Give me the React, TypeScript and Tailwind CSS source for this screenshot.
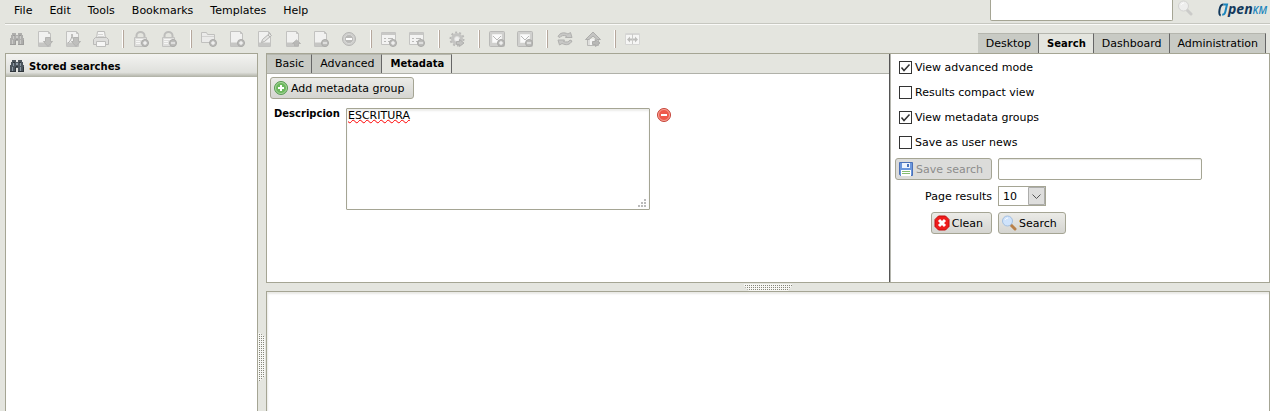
import React, { useState } from 'react';

type IconProps = { children: React.ReactNode; size?: number };

const Icon: React.FC<IconProps> = ({ children, size = 16 }) => (
  <svg width={size} height={size} viewBox="0 0 16 16" fill="none" aria-hidden="true" className="shrink-0">
    {children}
  </svg>
);

const PlusBadge = () => (
  <>
    <circle cx="12" cy="12" r="3.5" fill="#bdbdbb" stroke="#a9a9a7" />
    <path d="M10 12h4M12 10v4" stroke="#fff" />
  </>
);

const MinusBadge = () => (
  <>
    <circle cx="12" cy="12" r="3.5" fill="#bdbdbb" stroke="#a9a9a7" />
    <path d="M10 12h4" stroke="#fff" />
  </>
);

const Page = () => (
  <>
    <path d="M1.5.5h10l2 2v13h-12z" fill="#f1f1f0" stroke="#c2c2c0" />
    <path d="M2 13h11" stroke="#c6c6c4" strokeWidth="4" />
    <path d="M2 11.5h11" stroke="#dcdcda" />
    <path d="M11.5.5v2h2" stroke="#c2c2c0" />
  </>
);

const DownArrow = () => (
  <path d="M8.500 6.500h5v4h2l-4.500 5-4.500-5h2z" fill="#bfbfbd" stroke="#b3b3b1" />
);

const Binoculars: React.FC<{ dark?: boolean }> = ({ dark }) => {
  const body = dark ? '#4d565e' : '#aeaeac';
  const light = dark ? '#8d9aa5' : '#cacac8';
  const deep = dark ? '#2f363c' : '#9c9c9a';
  return (
    <Icon>
      <path d="M3 2h4v2h2V2h4v2h1v3h1v7H9v-4H7v4H1V7h1V4h1z" fill={body} />
      <path d="M4 4h2v1H4zM10 4h2v1h-2zM1 13h6v1H1zM9 13h6v1H9zM7 8h2v1H7zM6 9h1v4H6zM14 9h1v4h-1z" fill={deep} />
      <path d="M3 9h1v4H3zM11 9h1v4h-1zM4 5h1v3H4zM11 5h1v3h-1zM7 5h2v2H7z" fill={light} />
    </Icon>
  );
};

const Lock = () => (
  <>
    <path d="M3.500 7V4.500a4 3.500 0 0 1 8 0V7" stroke="#bdbdbb" strokeWidth="2" />
    <path d="M1.500 6.500h12v9h-12z" fill="#dededc" stroke="#c2c2c0" />
    <path d="M3 8.500h8M3 10.500h4M3 12.500h4" stroke="#f6f6f5" />
  </>
);

const FormSheet = () => (
  <>
    <path d="M.5 1.500h14v12H.5z" fill="#f3f3f2" stroke="#c4c4c2" />
    <path d="M1 3h13" stroke="#c8c8c6" strokeWidth="2" />
    <path d="M3 7.500h2M3 10.500h2M7 7.500h5M7 10.500h3" stroke="#b9b9b7" />
  </>
);

const Envelope = () => (
  <>
    <rect x=".5" y=".5" width="15" height="15" rx="1" fill="#d0d0ce" stroke="#b9b9b7" />
    <path d="M3.500 3.500h9v8h-9z" fill="#fafafa" stroke="#f0f0ef" />
    <path d="M4 5l4 4 4-4" stroke="#b9b9b7" />
  </>
);

const toolGroups: { label: string; art: React.ReactNode }[][] = [
  [
    { label: 'Find', art: <Binoculars /> },
    { label: 'Download', art: <Icon><Page /><DownArrow /></Icon> },
    {
      label: 'Download as PDF',
      art: (
        <Icon>
          <Page />
          <path d="M3 12c3-2 4-6 4-9 0 4 2 7 5 8" stroke="#b0b0ae" />
          <DownArrow />
        </Icon>
      ),
    },
    {
      label: 'Print',
      art: (
        <Icon>
          <path d="M3.500 7.500l1-7h7l1 7" fill="#f6f6f5" stroke="#bdbdbb" />
          <path d="M.5 8.500l2-2h11l2 2v5H.5z" fill="#dededc" stroke="#b9b9b7" />
          <path d="M3.500 10.500h9v5h-9z" fill="#f6f6f5" stroke="#bdbdbb" />
          <path d="M5 3.500h5M5 5.500h6" stroke="#d6d6d4" />
        </Icon>
      ),
    },
  ],
  [
    { label: 'Lock', art: <Icon><Lock /><PlusBadge /></Icon> },
    { label: 'Unlock', art: <Icon><Lock /><MinusBadge /></Icon> },
  ],
  [
    {
      label: 'Create folder',
      art: (
        <Icon>
          <path d="M.5 11.500v-10h5l1 2h7v8z" fill="#ebebea" stroke="#c0c0be" />
          <path d="M1 5.500h12" stroke="#d3d3d1" />
          <PlusBadge />
        </Icon>
      ),
    },
    { label: 'Add document', art: <Icon><Page /><PlusBadge /></Icon> },
    {
      label: 'Edit',
      art: (
        <Icon>
          <Page />
          <path d="M4.500 11.500l1-3 7-6 2 2-7 6z" fill="#e4e4e2" stroke="#b3b3b1" />
          <path d="M11 4l2 2" stroke="#b3b3b1" />
        </Icon>
      ),
    },
    {
      label: 'Check in',
      art: (
        <Icon>
          <Page />
          <path d="M11.500 9l4 3.500h-2V15h-4v-2.500h-2z" fill="#b9b9b7" stroke="#b3b3b1" />
        </Icon>
      ),
    },
    { label: 'Cancel check out', art: <Icon><Page /><MinusBadge /></Icon> },
    {
      label: 'Delete',
      art: (
        <Icon>
          <circle cx="8" cy="8" r="6.500" fill="#cfcfcd" stroke="#b5b5b3" />
          <circle cx="8" cy="8" r="4.500" fill="#b9b9b7" stroke="#d9d9d7" />
          <path d="M5 8h6" stroke="#fff" strokeWidth="2" />
        </Icon>
      ),
    },
  ],
  [
    { label: 'Add property group', art: <Icon><FormSheet /><PlusBadge /></Icon> },
    { label: 'Remove property group', art: <Icon><FormSheet /><MinusBadge /></Icon> },
  ],
  [
    {
      label: 'Start workflow',
      art: (
        <Icon>
          <circle cx="8" cy="8" r="6.500" stroke="#b9b9b7" strokeWidth="2" strokeDasharray="2 2" />
          <circle cx="8" cy="8" r="4.500" fill="#dededc" stroke="#c4c4c2" strokeWidth="3" />
          <circle cx="8" cy="8" r="2" fill="#f0f0ef" />
          <path d="M7.500 10.500h3v-2l4.500 3.500-4.500 3.500v-2h-3z" fill="#c2c2c0" stroke="#b0b0ae" />
        </Icon>
      ),
    },
  ],
  [
    { label: 'Add subscription', art: <Icon><Envelope /><PlusBadge /></Icon> },
    { label: 'Remove subscription', art: <Icon><Envelope /><MinusBadge /></Icon> },
  ],
  [
    {
      label: 'Refresh',
      art: (
        <Icon>
          <path d="M1 5.500C3 1.500 7 1 11 3l2.500-1.500L15 6.500H8.500l1-1.500C6.500 4 4 4.500 3 6.500z" fill="#c8c8c6" stroke="#b0b0ae" />
          <path d="M15 10c-2 4-6 4.500-10 2.500L2.500 14 1 9h6.500l-1 1.500c3 1 5.500.5 6.500-1.500z" fill="#c8c8c6" stroke="#b0b0ae" />
        </Icon>
      ),
    },
    {
      label: 'Home',
      art: (
        <Icon>
          <path d="M2.500 8v6.500h11V8" fill="#dededc" stroke="#b9b9b7" />
          <path d="M.5 8.500L8 1l7.500 7.500H12L8 5 4 8.500z" fill="#c4c4c2" stroke="#adadab" />
          <path d="M5 8h4v6H5z" fill="#f4f4f3" />
          <path d="M7.500 10.500h3v-2l4.500 3.500-4.500 3.500v-2h-3z" fill="#b9b9b7" stroke="#adadab" />
        </Icon>
      ),
    },
  ],
  [
    {
      label: 'Split view',
      art: (
        <Icon>
          <path d="M.5 2.500h14v11H.5z" fill="#f6f6f5" stroke="#d6d6d4" />
          <path d="M1 3h13" stroke="#d6d6d4" strokeWidth="2" />
          <path d="M7.500 3v10" stroke="#cacac8" />
          <path d="M2 8.500L5 5.500v2h2v2H5v2zM13 8.500l-3-3v2H8v2h2v2z" fill="#bdbdbb" />
        </Icon>
      ),
    },
  ],
];

const Magnifier: React.FC<{ disabled?: boolean }> = ({ disabled }) => (
  <Icon>
    <path d="M10 10l4 4" stroke={disabled ? '#cbcbc9' : '#b98048'} strokeWidth="3" strokeLinecap="round" />
    <circle cx="6.5" cy="6" r="5" fill={disabled ? '#eeeeed' : '#cfe3fb'} stroke={disabled ? '#d3d3d1' : '#a3bfe0'} />
    <path d="M4 5c.5-1 1.500-2 3-2" stroke="#fff" />
  </Icon>
);

const AddIcon = () => (
  <Icon>
    <circle cx="8" cy="8" r="6.500" fill="#6cb85e" stroke="#5a9a55" />
    <circle cx="8" cy="8" r="5.500" stroke="#a9d79d" />
    <path d="M5 8h6M8 5v6" stroke="#fff" strokeWidth="2" />
  </Icon>
);

const RemoveIcon = () => (
  <Icon>
    <circle cx="8" cy="7" r="6.500" fill="#ee5a4c" stroke="#c4463c" />
    <circle cx="8" cy="7" r="5.500" stroke="#f6a597" />
    <path d="M5 7h6" stroke="#fff" strokeWidth="2" />
  </Icon>
);

const DiskIcon = () => (
  <Icon>
    <path d="M1.500 1.500h13v13h-12l-1-1z" fill="#6c97dc" stroke="#4a70b8" />
    <path d="M4 2h8v5H4z" fill="#eef4fd" />
    <path d="M9 3h2v3H9z" fill="#4a74bd" />
    <path d="M3 9h10v6H3z" fill="#fff" />
    <path d="M4 10.500h8M4 12.500h8" stroke="#86bd70" />
  </Icon>
);

const CleanIcon = () => (
  <Icon>
    <path d="M4.500 1h7L15 4.500v7L11.500 15h-7L1 11.500v-7z" fill="#ee1c1c" stroke="#c40d0d" />
    <path d="M5 5l6 6M11 5l-6 6" stroke="#fff" strokeWidth="3" />
  </Icon>
);

const HorizontalGrip = () => (
  <svg width="48" height="7" aria-hidden="true">
    <defs>
      <pattern id="dots" width="2" height="2" patternUnits="userSpaceOnUse">
        <rect width="2" height="2" fill="#f7f7f4" />
        <rect x="1" y="1" width="1" height="1" fill="#85867a" />
      </pattern>
    </defs>
    <path d="M0 0h48v2l-4 5H5L0 2z" fill="url(#dots)" />
  </svg>
);

const VerticalGrip = () => (
  <svg width="7" height="48" aria-hidden="true">
    <path d="M0 0h2l5 4v39l-5 5H0z" fill="url(#dots)" />
  </svg>
);

interface TabBarProps {
  tabs: string[];
  active: string;
  onChange: (tab: string) => void;
}

const TabBar: React.FC<TabBarProps> = ({ tabs, active, onChange }) => (
  <div role="tablist" className="flex">
    {tabs.map(tab => (
      <button
        key={tab}
        role="tab"
        aria-selected={tab === active}
        onClick={() => onChange(tab)}
        className={`border-t border-r border-t-[#b5b6ae] border-r-[#666] pr-[7px] pl-2 ${
          tab === active ? 'bg-[#e4e5df] text-[10px] font-bold' : 'bg-[#c8cac4]'
        }`}
      >
        {tab}
      </button>
    ))}
  </div>
);

interface ActionButtonProps {
  icon: React.ReactNode;
  label: string;
  disabled?: boolean;
}

const ActionButton: React.FC<ActionButtonProps> = ({ icon, label, disabled }) => (
  <button
    disabled={disabled}
    className="flex h-[22px] items-center gap-[2px] rounded-[3px] border border-[#a5a594] bg-linear-to-b from-[#ebebe7] to-[#d5d5d1] pr-2 pl-[2px] whitespace-nowrap disabled:bg-none disabled:bg-[#dcdcda] disabled:text-[#8c8c8c]"
  >
    {icon}
    <span className="pt-[2px]">{label}</span>
  </button>
);

const menus = ['File', 'Edit', 'Tools', 'Bookmarks', 'Templates', 'Help'];

const App: React.FC = () => {
  const [mainTab, setMainTab] = useState('Search');
  const [searchTab, setSearchTab] = useState('Metadata');
  const [description, setDescription] = useState('ESCRITURA');
  const [options, setOptions] = useState([
    { label: 'View advanced mode', checked: true },
    { label: 'Results compact view', checked: false },
    { label: 'View metadata groups', checked: true },
    { label: 'Save as user news', checked: false },
  ]);

  const toggle = (label: string) =>
    setOptions(options.map(o => (o.label === label ? { ...o, checked: !o.checked } : o)));

  return (
    <div className="flex h-screen flex-col overflow-hidden bg-[#e4e5df] font-['DejaVu_Sans',Verdana,sans-serif] text-[11px] leading-4 text-black">
      <header className="ml-[5px] flex h-6 shrink-0 items-start border-b border-[#c6c7c0] shadow-[0_1px_0_#fafaf8]">
        <nav className="flex gap-[17px] pt-[3px] pl-[9px]">
          {menus.map(menu => (
            <button key={menu}>{menu}</button>
          ))}
        </nav>
        <div className="ml-auto flex items-start">
          <input
            aria-label="Quick search"
            className="h-[21px] w-[183px] rounded-b-[2px] border border-t-0 border-[#a5a594] bg-white px-1 outline-none"
          />
          <button disabled aria-label="Find" className="ml-1">
            <Magnifier disabled />
          </button>
          <a
            href="#"
            className="ml-[25px] flex w-[52px] items-baseline font-['Open_Sans',sans-serif] text-[14px] leading-[17px] text-[#12395c] italic"
          >
            <svg width="10" height="13" viewBox="0 0 10 13" fill="none" aria-hidden="true" className="shrink-0 overflow-visible">
              <path d="M5.500 3.500H5C2.800 3.500 2 6 1.500 9s-.3 5 1.200 5.500" stroke="#12395c" strokeWidth="2" />
              <path d="M5.500 3.500H9L7.500 10c-.5 2.500-1.500 4-3.300 3.500" stroke="#1b86bd" strokeWidth="2" />
            </svg>
            <span className="font-bold">pen</span>
            <span className="text-[10px] font-semibold text-[#1b86bd]">KM</span>
          </a>
        </div>
      </header>

      <div className="flex h-[29px] shrink-0 items-end justify-between pr-[4px] pl-[3px]">
        <div className="flex h-[29px] items-center">
          {toolGroups.map((group, i) => (
            <React.Fragment key={i}>
              {i > 0 && (
                <div className="w-3 pl-[7px]">
                  <div className="h-[18px] w-[2px] border-r border-[#b5a79c] bg-white" />
                </div>
              )}
              {group.map(tool => (
                <button key={tool.label} disabled aria-label={tool.label} className="flex w-7 justify-center">
                  {tool.art}
                </button>
              ))}
            </React.Fragment>
          ))}
        </div>
        <div className="flex h-5">
          <TabBar
            tabs={['Desktop', 'Search', 'Dashboard', 'Administration']}
            active={mainTab}
            onChange={setMainTab}
          />
        </div>
      </div>

      <main className="flex min-h-0 flex-1 pl-[5px]">
        <aside className="w-[253px] shrink-0 border border-b-0 border-[#a5a594] bg-white">
          <h2 className="flex h-[23px] items-center gap-1 bg-linear-to-b from-[#f3f3f1] via-[#dfe0dc] via-80% to-[#aeb0a4] pl-[3px] text-[10px] font-bold">
            <Binoculars dark />
            <span className="pt-[2px]">Stored searches</span>
          </h2>
        </aside>

        <div className="flex w-2 shrink-0 cursor-col-resize items-start pt-[280px]">
          <VerticalGrip />
        </div>

        <div className="flex min-w-0 flex-1 flex-col">
          <div className="flex h-[230px] shrink-0 border border-[#a5a594] bg-white">
            <section className="flex min-w-0 flex-1 flex-col">
              <div className="flex h-5 border-b border-[#b0b1a9] bg-[#e4e5df]">
                <TabBar tabs={['Basic', 'Advanced', 'Metadata']} active={searchTab} onChange={setSearchTab} />
              </div>
              <div className="flex flex-col items-start px-[3px] pt-[3px]">
                <ActionButton icon={<AddIcon />} label="Add metadata group" />
                <div className="flex items-start pt-[9px] pl-1">
                  <label htmlFor="description" className="w-[72px] text-[10px] leading-3 font-bold">
                    Descripcion
                  </label>
                  <div className="relative">
                    <textarea
                      id="description"
                      value={description}
                      onChange={e => setDescription(e.target.value)}
                      className="block h-[102px] w-[304px] resize-none rounded-[1px] border border-[#a5a594] px-px leading-[14px] underline decoration-[#f00] decoration-wavy decoration-1 underline-offset-0 shadow-[inset_0_2px_2px_#ececea] outline-none"
                    />
                    <svg width="8" height="8" aria-hidden="true" className="absolute right-1 bottom-[3px]">
                      <path d="M6 0h2v2H6zM3 3h2v2H3zM6 3h2v2H6zM0 6h2v2H0zM3 6h2v2H3zM6 6h2v2H6z" fill="#bbb" />
                    </svg>
                  </div>
                  <button aria-label="Remove Descripcion" className="ml-[6px]">
                    <RemoveIcon />
                  </button>
                </div>
              </div>
            </section>

            <section className="w-[380px] shrink-0 border-l border-[#555] pt-[5px] pl-[5px] shadow-[inset_1px_0_0_#b5b6ae]">
              <div className="flex flex-col items-start gap-2 pl-1 leading-[17px]">
                {options.map(option => (
                  <label key={option.label} className="flex items-center gap-[3px]">
                    <span className="grid size-[13px]">
                      <input
                        type="checkbox"
                        checked={option.checked}
                        onChange={() => toggle(option.label)}
                        className="peer col-start-1 row-start-1 size-[13px] appearance-none border border-[#333] bg-white"
                      />
                      <svg
                        viewBox="0 0 13 13"
                        fill="none"
                        aria-hidden="true"
                        className="pointer-events-none invisible col-start-1 row-start-1 size-[13px] peer-checked:visible"
                      >
                        <path d="M2.500 6.500L5 9.500l5.500-6" stroke="#333" strokeWidth="1.500" />
                      </svg>
                    </span>
                    {option.label}
                  </label>
                ))}
              </div>
              <div className="grid grid-cols-[97px_204px] items-center gap-x-[6px] gap-y-[6px] pt-[7px]">
                <ActionButton icon={<DiskIcon />} label="Save search" disabled />
                <input
                  aria-label="Search name"
                  className="h-[22px] w-full rounded-[2px] border border-[#a5a594] px-1 shadow-[inset_0_1px_1px_#e4e4e0] outline-none"
                />
                <label htmlFor="page-results" className="pt-[2px] text-right">
                  Page results
                </label>
                <div className="relative flex h-5 w-12">
                  <select
                    id="page-results"
                    defaultValue="10"
                    className="h-5 w-12 appearance-none border border-[#a5a594] bg-white pt-px pl-1 outline-none"
                  >
                    <option>10</option>
                    <option>20</option>
                    <option>30</option>
                  </select>
                  <svg width="17" height="18" fill="none" aria-hidden="true" className="pointer-events-none absolute top-px right-px">
                    <path d="M.5.5h16v17H.5z" fill="#dededd" stroke="#adadab" />
                    <path d="M4.500 7.500l4 4 4-4" stroke="#555" />
                  </svg>
                </div>
                <div className="justify-self-end">
                  <ActionButton icon={<CleanIcon />} label="Clean" />
                </div>
                <div className="justify-self-start">
                  <ActionButton icon={<Magnifier />} label="Search" />
                </div>
              </div>
            </section>
          </div>

          <div className="flex h-2 shrink-0 cursor-row-resize items-center justify-center">
            <HorizontalGrip />
          </div>

          <section
            aria-label="Search results"
            className="min-h-0 flex-1 border border-b-0 border-[#a5a594] bg-white shadow-[inset_1px_2px_2px_#e9e9e6]"
          />
        </div>
      </main>
    </div>
  );
};

export default App;
